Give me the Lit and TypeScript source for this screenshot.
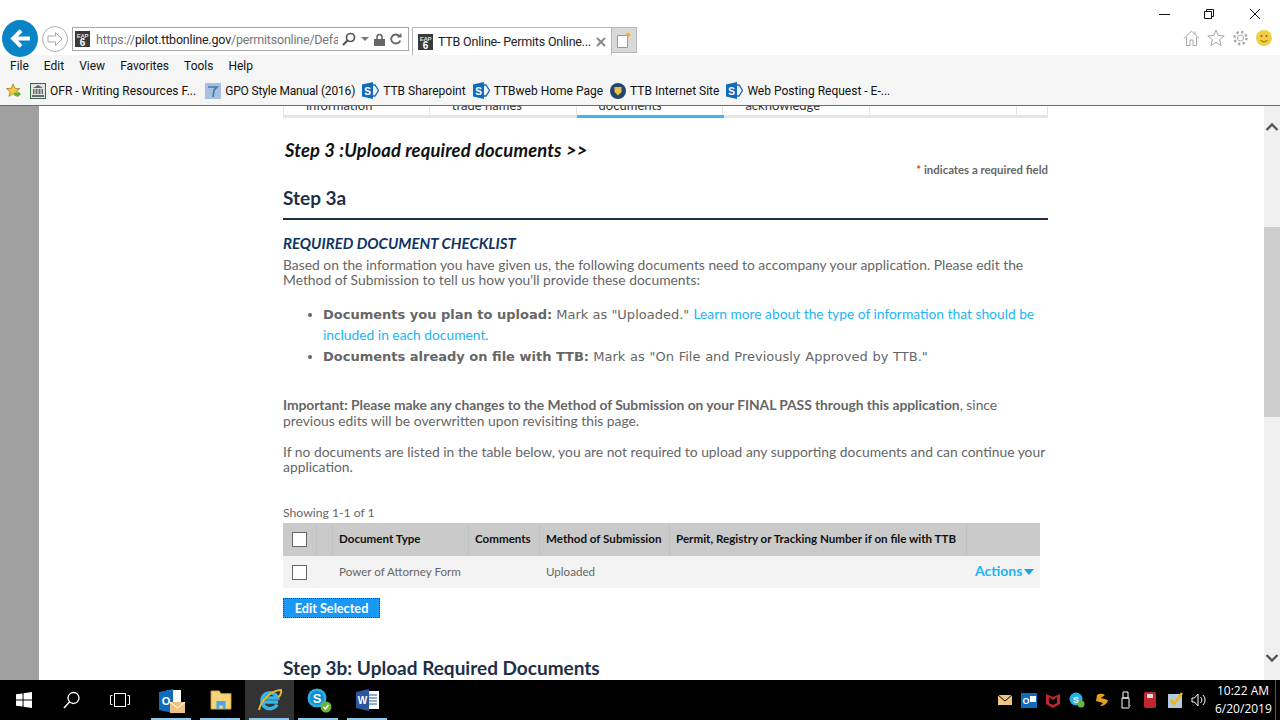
import { LitElement, html, css } from "lit";
import { customElement } from "lit/decorators.js";

const eap = html`<svg viewBox="0 0 15 16" width="15" height="16"><rect width="15" height="16" fill="#3a3a3a"/><text x="7.500" y="6.500" font-size="6" font-weight="700" text-anchor="middle" fill="#ddd" font-family="Liberation Sans">EAP</text><text x="7.500" y="15" font-size="10" font-weight="700" text-anchor="middle" fill="#fff" font-family="Liberation Sans">6</text></svg>`;
const sp = html`<svg viewBox="0 0 17 17" width="17" height="17"><path d="M11 3l2 0 3.500 5.500L13 14h-2" fill="none" stroke="#0f6cbd" stroke-width="1.300"/><path d="M0 2.500L11 0v17L0 14.500z" fill="#0f6cbd"/><text x="5.500" y="12.500" font-size="10" font-weight="700" text-anchor="middle" fill="#fff" font-family="Liberation Sans">S</text></svg>`;

@customElement("app-root")
export class AppRoot extends LitElement {
  static styles = css`
    :host { display: flex; flex-direction: column; width: 1280px; height: 720px; overflow: hidden; background: #fff; font-family: "Lato", sans-serif; }
    .chrome { height: 55px; flex: none; position: relative; z-index: 1; background: #fff; }
    .nav { display: flex; align-items: flex-start; padding: 20px 0 0 2px; }
    .back { width: 36px; height: 37px; border-radius: 50%; background: #0a84c6; box-sizing: border-box; display: flex; align-items: center; justify-content: center; flex: none; }
    .fwd { width: 26px; height: 26px; border-radius: 50%; border: 1px solid #b0b0b0; box-sizing: border-box; margin: 6px 0 0 4px; display: flex; align-items: center; justify-content: center; flex: none; }
    .addr { width: 337px; height: 24px; margin: 7px 0 0 4px; border: 1px solid #a8a8a8; box-sizing: border-box; display: flex; align-items: center; padding-left: 2px; font: 12.500px "Roboto", sans-serif; letter-spacing: -0.2px; color: #777; white-space: nowrap; flex: none; }
    .addr .url { margin-left: 6px; width: 242px; overflow: hidden; flex: none; }
    .addr b { font-weight: 400; color: #222; }
    .addr .tools { display: flex; align-items: center; gap: 5px; margin-left: 4px; }
    .tab { width: 200px; height: 28px; margin: 7px 0 0 3px; border: 1px solid #b8b8b8; border-bottom: 0; box-sizing: border-box; display: flex; align-items: center; padding-left: 5px; font: 12.500px "Roboto", sans-serif; letter-spacing: -0.2px; color: #222; white-space: nowrap; gap: 5px; flex: none; }
    .tab .lab { width: 153px; overflow: hidden; flex: none; }
    .newtab { width: 25px; height: 26px; margin-top: 7px; background: #d9d9d9; border: 1px solid #b8b8b8; box-sizing: border-box; border-left: 0; display: flex; align-items: center; justify-content: center; flex: none; }
    .win { position: absolute; right: 0; top: 0; width: 145px; height: 30px; }
    .win svg { position: absolute; top: 8px; }
    .win .min { left: 24px; }
    .win .max { left: 69px; }
    .win .cls { left: 114px; }
    .right { position: absolute; top: 28px; left: 1183px; display: flex; gap: 7px; }
    .bars { height: 50px; flex: none; background: #f5f5f5; border-bottom: 1px solid #6d6d6d; font: 12px "Roboto", sans-serif; color: #111; }
    .menu { height: 21px; display: flex; gap: 15px; padding: 0 0 0 10px; align-items: center; }
    .favs { height: 29px; display: flex; align-items: center; padding-left: 6px; white-space: nowrap; }
    .fav { display: flex; align-items: center; gap: 4px; margin-right: 7px; }
    .fav.star { margin-right: 8px; }
    .fav.ofr { margin-right: 9px; }
    .fav.gpo { letter-spacing: -0.17px; }
    .main { flex: 1; min-height: 0; display: flex; overflow: hidden; }
    .gutter { width: 39px; flex: none; background: #a0a0a0; }
    .page { flex: 1; min-width: 0; padding-left: 244px; overflow: hidden; }
    .col { width: 765px; color: #666; font-size: 13.850px; }
    .tabs { height: 9px; display: flex; overflow: hidden; width: 765px; font: 13px "Lato"; color: #333; }
    .tabs div { border-right: 1px solid #e5e5e5; box-sizing: border-box; height: 9px; padding-left: 22px; white-space: nowrap; }
    .tabs div:first-child { border-left: 1px solid #e5e5e5; }
    .tabs span { display: block; margin-top: -8px; line-height: 14px; }
    .tabs .w146 { width: 147px; }
    .tabs .w31 { width: 31px; }
    .band { height: 3px; background: #e5e5e5; display: flex; padding-left: 294px; }
    .band i { display: block; width: 147px; height: 3px; background: #3ab7f5; }
    .step { font-size: 18.400px; font-style: italic; font-weight: 700; color: #111; margin: 22px 0 0 2px; line-height: 20px; letter-spacing: 0.15px; white-space: nowrap; }
    .req { text-align: right; font-size: 11.400px; font-weight: 700; line-height: 14px; margin-top: 3px; color: #666; }
    .req span { color: #c8511b; }
    h2 { font-size: 19px; font-weight: 700; color: #1e2f48; margin: 0; line-height: 24px; }
    .h3a { margin-top: 9px; padding-bottom: 8px; border-bottom: 2px solid #1e2f48; }
    .chk { font-size: 15px; font-weight: 700; font-style: italic; color: #0e3564; line-height: 18px; margin-top: 14px; }
    p { margin: 0; line-height: 15px; }
    p.first { margin-top: 5px; }
    ul { margin: 17px 0 0; padding: 0 0 0 40px; font: 13px/21px "DejaVu Sans", sans-serif; }
    li span { word-spacing: 0.6px; }
    a { color: #1cb4f5; font: 13.800px/1 "Lato"; }
    .imp { margin-top: 30px; line-height: 16px; }
    .imp b { letter-spacing: -0.05px; }
    .if { margin-top: 15px; }
    .show { margin-top: 31px; font-size: 12.200px; line-height: 16px; }
    .tbl { width: 757px; margin-top: 2px; font-size: 11.600px; }
    .tr { display: grid; grid-template-columns: 34px 16px 136px 71px 130px 297px 73px; align-items: center; }
    .th { height: 33px; background: #cacaca; color: #111; font-weight: 700; box-sizing: border-box; }
    .th > div { height: 100%; border-right: 1px solid #c0c0c0; box-sizing: border-box; display: flex; align-items: center; padding: 0 0 2px 6px; white-space: nowrap; }
    .th > div:last-child { border: 0; }
    .td { height: 32px; background: #f3f3f3; color: #666; }
    .td > div { padding: 0 0 2px 6px; white-space: nowrap; }
    .th > div:first-child, .td > div:first-child { padding: 0 0 0 9px; }
    .cb { display: block; width: 15px; height: 15px; box-sizing: border-box; background: #fff; border: 1px solid #666; }
    .td > .actions { color: #1cb4f5; font-size: 14px; font-weight: 700; display: flex; align-items: center; gap: 2px; padding: 0 0 3px 8px; }
    .tri { width: 0; height: 0; border-left: 5px solid transparent; border-right: 5px solid transparent; border-top: 6px solid #1a9fe0; margin-top: 2px; }
    .btn { width: 97px; height: 20px; margin-top: 10px; background: #1a98f5; color: #fff; font-size: 12.700px; font-weight: 700; border: 1px dotted #14507f; box-sizing: border-box; display: flex; align-items: center; justify-content: center; }
    .h3b { margin-top: 38px; }
    .scroll { width: 16px; flex: none; background: #f0f0f0; display: flex; flex-direction: column; align-items: center; justify-content: space-between; position: relative; padding: 16px 0 17px; box-sizing: border-box; }
    .thumb { position: absolute; left: 0; top: 121px; width: 16px; height: 190px; background: #cdcdcd; }
    .task { height: 40px; flex: none; background: #000; display: flex; align-items: stretch; color: #fff; }
    .tb { width: 48px; display: flex; align-items: center; justify-content: center; position: relative; flex: none; }
    .tb.on { background: #333; }
    .tb.open { width: 49px; }
    .tb.first { margin-left: 3px; }
    .tb.open::after { content: ""; position: absolute; left: 4px; right: 5px; bottom: 0; height: 2px; background: #8cc8ec; }
    .tray { margin-left: auto; display: flex; align-items: center; gap: 9px; }
    .tray .m1 { margin-left: 1px; }
    .tray .m2 { margin-left: 3px; }
    .tray .mn { margin-left: -2px; }
    .clock { font: 12px/18px "Open Sans", sans-serif; text-align: center; width: 56px; margin-left: -1px; }
    .end { width: 5px; height: 40px; border-left: 1px solid #555; box-sizing: border-box; margin-left: -5px; }
  `;

  render() {
    return html`
      <div class="chrome">
        <div class="nav">
          <div class="back"><svg viewBox="0 0 24 24" width="25" height="25"><path d="M12.500 4.500L5 12l7.500 7.500M5 12h16" fill="none" stroke="#fff" stroke-width="3.800"/></svg></div>
          <div class="fwd"><svg viewBox="0 0 18 18" width="18" height="18"><path d="M9.500 2.500L16 9l-6.500 6.500V12H2V6h7.500z" fill="none" stroke="#aaa"/></svg></div>
          <div class="addr">${eap}<span class="url">https://<b>pilot.ttbonline.gov</b>/permitsonline/Default.aspx</span>
            <span class="tools">
              <svg viewBox="0 0 14 14" width="14" height="14"><circle cx="8.500" cy="5.500" r="4" fill="none" stroke="#555" stroke-width="1.700"/><path d="M5.500 8.500L1 13" stroke="#555" stroke-width="2.200"/></svg>
              <svg viewBox="0 0 8 4" width="8" height="4"><path d="M0 0h8L4 4z" fill="#777"/></svg>
              <svg viewBox="0 0 11 13" width="11" height="13"><path d="M3 6V4a2.500 2.500 0 015 0v2" fill="none" stroke="#666" stroke-width="1.500"/><rect y="6" width="11" height="7" fill="#666"/></svg>
              <svg viewBox="0 0 12 12" width="12" height="12"><path d="M9.500 3.500A4.500 4.500 0 106 10.500a4.500 4.500 0 004.200-3" fill="none" stroke="#666" stroke-width="1.800"/><path d="M7 4.500h4.500V0z" fill="#666"/></svg>
            </span>
          </div>
          <div class="tab">${eap}<span class="lab">TTB Online- Permits Online...</span><svg width="10" height="10" viewBox="0 0 10 10"><path d="M1 1l8 8M9 1l-8 8" stroke="#8a8a8a" stroke-width="2"/></svg></div>
          <div class="newtab"><svg viewBox="0 0 16 16" width="16" height="16"><path d="M1.500 3.500h10v12h-10z" fill="#fff" stroke="#999"/><path d="M12 0l1 2 2 1-2 1-1 2-1-2-2-1 2-1z" fill="#f5a623"/></svg></div>
        </div>
        <div class="win">
          <svg class="min" width="11" height="12" viewBox="0 0 11 12"><path d="M0 6.500h11" stroke="#111"/></svg>
          <svg class="max" width="10" height="12" viewBox="0 0 10 12"><path d="M.5 3.500h7v7h-7zM2.500 3.500v-2h7v7h-2" fill="none" stroke="#111"/></svg>
          <svg class="cls" width="12" height="12" viewBox="0 0 12 12"><path d="M1 1l10 10M11 1L1 11" stroke="#111"/></svg>
        </div>
        <div class="right">
          <svg width="17" height="20" viewBox="0 0 17 20"><path d="M.8 10.500L8.500 3l7.700 7.500M3.500 9v8.500h3.500v-5.500h3v5.500h3.500V9M12 3.500v2.500" fill="none" stroke="#a8a8a8"/></svg>
          <svg width="18" height="20" viewBox="0 0 18 20"><path d="M9 2l2.200 5.500 6 .4-4.600 3.800 1.500 5.800L9 14.300l-5.100 3.200 1.500-5.800L.8 7.900l6-.4z" fill="none" stroke="#a8a8a8"/></svg>
          <svg width="17" height="20" viewBox="0 0 17 20"><circle cx="8.500" cy="10" r="3" fill="none" stroke="#a8a8a8"/><circle cx="8.500" cy="10" r="6" fill="none" stroke="#a8a8a8" stroke-width="2.500" stroke-dasharray="2.300 2.400"/></svg>
          <svg width="16" height="20" viewBox="0 0 16 20"><circle cx="8" cy="10" r="8" fill="#f0cf45"/><circle cx="5.500" cy="8" r="1" fill="#806010"/><circle cx="10.500" cy="8" r="1" fill="#806010"/><path d="M4.500 12c2 2.500 5 2.500 7 0" fill="none" stroke="#806010"/></svg>
        </div>
      </div>
      <div class="bars">
        <div class="menu"><span>File</span><span>Edit</span><span>View</span><span>Favorites</span><span>Tools</span><span>Help</span></div>
        <div class="favs">
          <span class="fav star"><svg width="16" height="18" viewBox="0 0 18 18"><path d="M8 1l2 5 5.500.3-4.200 3.500L12.700 15 8 12.200 3.300 15l1.400-5.200L.5 6.300 6 6z" fill="#f4c84a" stroke="#b08a20"/><path d="M9 11h4V9l4 3.500-4 3.500v-2H9z" fill="#5cb030"/></svg></span>
          <span class="fav ofr"><svg width="16" height="16" viewBox="0 0 16 16"><rect x=".5" y=".5" width="15" height="15" fill="#dfe8d8" stroke="#38684c"/><path d="M3 5l5-3 5 3zM3 6h10v5H3zM2 12h12v2H2z" fill="#667"/><path d="M5 6v5M8 6v5M11 6v5" stroke="#eee"/></svg>OFR - Writing Resources F...</span>
          <span class="fav gpo"><svg width="16" height="16" viewBox="0 0 16 16"><rect width="16" height="16" fill="#a5c0e0"/><path d="M3 4h9L9 7l-1 7" fill="none" stroke="#4a78a8" stroke-width="1.700"/></svg>GPO Style Manual (2016)</span>
          <span class="fav">${sp}TTB Sharepoint</span>
          <span class="fav">${sp}TTBweb Home Page</span>
          <span class="fav"><svg width="16" height="16" viewBox="0 0 16 16"><circle cx="8" cy="8" r="8" fill="#24456e"/><path d="M4.500 4h7v5l-3.500 3.500L4.500 9z" fill="#e6c24a"/></svg>TTB Internet Site</span>
          <span class="fav">${sp}Web Posting Request - E-...</span>
        </div>
      </div>
      <div class="main">
        <div class="gutter"></div>
        <div class="page"><div class="col">
          <div class="tabs">
            <div class="w146"><span>information</span></div><div class="w146"><span>trade names</span></div><div class="w146"><span>documents</span></div><div class="w146"><span>acknowledge</span></div><div class="w146"></div><div class="w31"></div>
          </div>
          <div class="band"><i></i></div>
          <div class="step">Step 3 :Upload required documents &gt;&gt;</div>
          <div class="req"><span>*</span> indicates a required field</div>
          <h2 class="h3a">Step 3a</h2>
          <div class="chk">REQUIRED DOCUMENT CHECKLIST</div>
          <p class="first">Based on the information you have given us, the following documents need to accompany your application. Please edit the Method of Submission to tell us how you'll provide these documents:</p>
          <ul>
            <li><b>Documents you plan to upload:</b> Mark as "Uploaded." <a>Learn more about the type of information that should be included in each document.</a></li>
            <li><b>Documents already on file with TTB:</b> <span>Mark as "On File and Previously Approved by TTB."</span></li>
          </ul>
          <p class="imp"><b>Important: Please make any changes to the Method of Submission on your FINAL PASS through this application</b>, since previous edits will be overwritten upon revisiting this page.</p>
          <p class="if">If no documents are listed in the table below, you are not required to upload any supporting documents and can continue your application.</p>
          <div class="show">Showing 1-1 of 1</div>
          <div class="tbl">
            <div class="tr th"><div><span class="cb"></span></div><div></div><div>Document Type</div><div>Comments</div><div>Method of Submission</div><div>Permit, Registry or Tracking Number if on file with TTB</div><div></div></div>
            <div class="tr td"><div><span class="cb"></span></div><div></div><div>Power of Attorney Form</div><div></div><div>Uploaded</div><div></div><div class="actions">Actions<span class="tri"></span></div></div>
          </div>
          <div class="btn">Edit Selected</div>
          <h2 class="h3b">Step 3b: Upload Required Documents</h2>
        </div></div>
        <div class="scroll">
          <svg width="14" height="10" viewBox="0 0 14 10"><path d="M1.500 8L7 2.500 12.500 8" fill="none" stroke="#555" stroke-width="2.400"/></svg>
          <div class="thumb"></div>
          <svg width="14" height="10" viewBox="0 0 14 10"><path d="M1.500 2L7 7.500 12.500 2" fill="none" stroke="#555" stroke-width="2.400"/></svg>
        </div>
      </div>
      <div class="task">
        <div class="tb"><svg width="16" height="16" viewBox="0 0 17 17"><path d="M0 2.500L7 1.500v6.500H0zM8 1.300L17 0v8H8zM0 9h7v6.500l-7-1zM8 9h9v8l-9-1.300z" fill="#fff"/></svg></div>
        <div class="tb"><svg width="18" height="18" viewBox="0 0 18 18"><circle cx="10.500" cy="7" r="5.500" fill="none" stroke="#fff" stroke-width="1.300"/><path d="M6.500 11L1 17" stroke="#fff" stroke-width="1.500"/></svg></div>
        <div class="tb"><svg width="20" height="14" viewBox="0 0 20 14"><rect x="4.500" y=".5" width="11" height="13" fill="none" stroke="#fff"/><path d="M2.500 2.500H.5v9h2M17.500 2.500h2v9h-2" fill="none" stroke="#fff"/></svg></div>
        <div class="tb open first"><svg width="28" height="28" viewBox="0 0 28 28"><rect x="9" y="4" width="14" height="14" fill="#fff"/><path d="M1 6l14-3v24L1 24z" fill="#0f6cbd"/><text x="8" y="19" font-size="11" font-weight="700" fill="#fff" text-anchor="middle" font-family="Liberation Sans">O</text><rect x="12" y="16" width="15" height="11" fill="#eec486"/><path d="M12 16l7.500 6 7.500-6" fill="none" stroke="#fff"/></svg></div>
        <div class="tb open"><svg width="22" height="20" viewBox="0 0 24 22"><path d="M1 1h9l2 3h11v17H1z" fill="#f4d37a" stroke="#c9a030"/><path d="M7 12h10v9h-3v-4h-4v4H7z" fill="#4aa8e8"/></svg></div>
        <div class="tb on open"><svg width="26" height="26" viewBox="0 0 26 26"><path d="M20 17.500a8 8 0 11.500-6.500H8M7 15h14" fill="none" stroke="#35b5e8" stroke-width="3.500"/><path d="M2 23C4 13 15 3 24 3c1 3-1 6-3 7" fill="none" stroke="#eab52a" stroke-width="2"/></svg></div>
        <div class="tb open"><svg width="26" height="26" viewBox="0 0 26 26"><circle cx="11" cy="11" r="9.500" fill="#2ab0e8"/><circle cx="11" cy="11" r="7" fill="#118fcc"/><text x="11" y="15.500" font-size="13" font-weight="700" fill="#fff" text-anchor="middle" font-family="Liberation Sans">S</text><circle cx="20" cy="20" r="5.500" fill="#6cb33f"/><path d="M17.500 20l2 2 3-4" fill="none" stroke="#fff" stroke-width="1.300"/></svg></div>
        <div class="tb open"><svg width="24" height="22" viewBox="0 0 24 22"><rect x="9" y="2" width="14" height="18" fill="#fff"/><path d="M13 6h8M13 9h8M13 12h8M13 15h8" stroke="#2b579a"/><path d="M0 3l13-3v22L0 19z" fill="#2b579a"/><text x="6.500" y="15" font-size="10" font-weight="700" fill="#fff" text-anchor="middle" font-family="Liberation Sans">W</text></svg></div>
        <div class="tray">
          <svg width="14" height="10" viewBox="0 0 14 10"><rect width="14" height="10" fill="#eec486"/><path d="M0 0l7 6 7-6" fill="none" stroke="#000"/></svg>
          <svg width="16" height="15" viewBox="0 0 16 15"><rect width="16" height="15" fill="#0f6cbd"/><text x="5" y="11" font-size="9" font-weight="700" fill="#fff" text-anchor="middle" font-family="Liberation Sans">O</text><rect x="9" y="3" width="6" height="6" fill="#fff"/></svg>
          <svg width="14" height="15" viewBox="0 0 14 15"><path d="M0 1l7 3 7-3v10l-7 4-7-4z" fill="#c0272d"/><path d="M3 4l4 3 4-3v6l-4 2-4-2z" fill="#000"/></svg>
          <svg width="16" height="16" viewBox="0 0 16 16"><circle cx="7" cy="7" r="6.500" fill="#2ab0e8"/><text x="7" y="10.500" font-size="9" font-weight="700" fill="#fff" text-anchor="middle" font-family="Liberation Sans">S</text><circle cx="12" cy="12" r="3.500" fill="#6cb33f"/></svg>
          <svg width="16" height="16" viewBox="0 0 16 16"><path d="M3 3c3-2 6-1 8 0L7 6l7 2c-1 4-4 6-8 6l3-3-7-2z" fill="#e0a020"/></svg>
          <svg class="m1" width="12" height="18" viewBox="0 0 12 18"><path d="M2 7h7v10H2zM3 1h5v6H3z" fill="none" stroke="#fff"/><path d="M8 17l3-3" stroke="#888"/></svg>
          <svg class="m2" width="12" height="16" viewBox="0 0 12 16"><rect width="12" height="16" rx="2" fill="#c0272d"/><rect x="3" y="2" width="6" height="4" fill="#ddd"/></svg>
          <svg class="m2" width="16" height="16" viewBox="0 0 16 16"><rect y="2" width="14" height="14" fill="#b5c9dd"/><path d="M3 8l3 4 8-11" fill="none" stroke="#f5b400" stroke-width="2.500"/></svg>
          <svg class="mn" width="16" height="14" viewBox="0 0 16 14"><path d="M1 5h2.500L7 1v12L3.500 9H1z" fill="none" stroke="#fff"/><path d="M9.500 4a4 4 0 010 6M12 2a7 7 0 010 10" fill="none" stroke="#fff"/></svg>
          <div class="clock">10:22 AM<br/>6/20/2019</div>
          <div class="end"></div>
        </div>
      </div>
    `;
  }
}
